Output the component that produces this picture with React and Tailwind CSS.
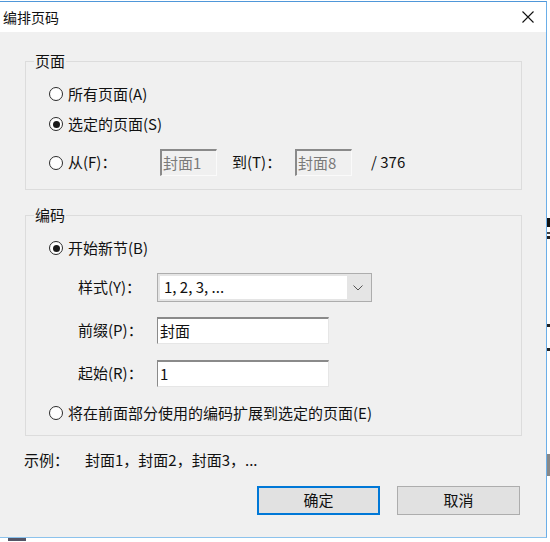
import React from 'react';

const Radio = ({ checked }) => (
  <span className="w-[14px] h-[14px] rounded-full border border-[#2b2b2b] bg-white flex items-center justify-center shrink-0">
    {checked && <span className="w-[7px] h-[7px] rounded-full bg-[#1a1a1a]"></span>}
  </span>
);

const Group = ({ title, className, children }) => (
  <div className={`relative w-[497px] border border-[#dcdcdc] ${className}`}>
    <span className="absolute left-[8px] -top-[11px] px-[1px] bg-[#f0f0f0] leading-[20px]">{title}</span>
    {children}
  </div>
);

const DisabledInput = ({ value, width }) => (
  <div className={`h-[27px] ${width} bg-[#f0f0f0] border-t-2 border-l-2 border-[#8a8a8a] border-r border-b border-r-[#fafafa] border-b-[#fafafa] flex items-center pl-[1px] text-[#7a7a7a]`}>
    {value}
  </div>
);

const TextInput = ({ value }) => (
  <div className="h-[27px] w-[172px] bg-white border-t-2 border-l border-[#8a8a8a] border-r border-b border-r-[#e6e6e6] border-b-[#e6e6e6] flex items-center pl-[2px]">
    {value}
  </div>
);

export default function App() {
  return (
    <div className="w-[550px] h-[542px] bg-white relative overflow-hidden text-[15px] text-[#111]" style={{ fontFamily: '"Noto Sans CJK SC", "Noto Sans", sans-serif' }}>
      <div className="mt-[1px] w-[547px] h-[537px] border-t border-r border-b border-t-[#4f97d9] border-r-[#6aaee8] border-b-[#8cc2ec] flex flex-col">
        {/* title bar */}
        <div className="h-[30px] bg-white flex items-center justify-between pl-[3px] pr-[11px] shrink-0">
          <span className="text-[14px] leading-none">编排页码</span>
          <svg width="12" height="12" viewBox="0 0 12 12" className="mr-[1px]">
            <path d="M0.5 0.5 L11.5 11.5 M11.5 0.5 L0.5 11.5" stroke="#111" strokeWidth="1.1" />
          </svg>
        </div>

        {/* body */}
        <div className="flex-1 bg-[#f0f0f0] pl-[25px] flex flex-col">
          <Group title="页面" className="mt-[29px] pt-[22px] pb-[13px] pl-[23px]">
            <label className="flex items-center gap-[5px] h-[20px]">
              <Radio />
              <span>所有页面(A)</span>
            </label>
            <label className="flex items-center gap-[5px] h-[20px] mt-[10px]">
              <Radio checked />
              <span>选定的页面(S)</span>
            </label>
            <div className="flex items-center h-[27px] mt-[15px]">
              <label className="flex items-center gap-[5px] w-[111px]">
                <Radio />
                <span>从(F)：</span>
              </label>
              <DisabledInput value="封面1" width="w-[57px]" />
              <span className="ml-[15px] w-[63px]">到(T)：</span>
              <DisabledInput value="封面8" width="w-[57px]" />
              <span className="ml-[19px]">/ 376</span>
            </div>
          </Group>

          <Group title="编码" className="mt-[25px] pt-[22px] pb-[12px] pl-[23px]">
            <label className="flex items-center gap-[5px] h-[20px]">
              <Radio checked />
              <span>开始新节(B)</span>
            </label>
            <div className="flex items-center mt-[15px] pl-[29px]">
              <span className="w-[79px]">样式(Y)：</span>
              <div className="w-[215px] h-[29px] border border-[#adadad] bg-[#e5e5e5] flex items-center p-[2px]">
                <div className="flex-1 h-full bg-white flex items-center pl-[4px]">1, 2, 3, ...</div>
                <div className="w-[22px] flex items-center justify-center">
                  <svg width="10" height="6" viewBox="0 0 10 6">
                    <path d="M0.5 0.5 L5 5 L9.5 0.5" fill="none" stroke="#555" strokeWidth="1" />
                  </svg>
                </div>
              </div>
            </div>
            <div className="flex items-center mt-[15px] pl-[29px]">
              <span className="w-[79px]">前缀(P)：</span>
              <TextInput value="封面" />
            </div>
            <div className="flex items-center mt-[16px] pl-[29px]">
              <span className="w-[79px]">起始(R)：</span>
              <TextInput value="1" />
            </div>
            <label className="flex items-center gap-[5px] h-[20px] mt-[16px]">
              <Radio />
              <span>将在前面部分使用的编码扩展到选定的页面(E)</span>
            </label>
          </Group>

          <div className="flex items-center h-[20px] mt-[14px] -ml-[1px]">
            <span className="w-[61px]">示例：</span>
            <span>封面1，封面2，封面3，...</span>
          </div>

          <div className="flex justify-end gap-[17px] mt-[16px] pr-[26px]">
            <button className="w-[123px] h-[29px] bg-[#e1e1e1] border-2 border-[#0078d7] text-[15px]">确定</button>
            <button className="w-[123px] h-[29px] bg-[#e1e1e1] border border-[#adadad] text-[15px]">取消</button>
          </div>
        </div>
      </div>

      {/* bits of the page behind the dialog */}
      <div className="absolute left-[547px] top-[218px] w-[3px] h-[9px] bg-[#111]"></div>
      <div className="absolute left-[547px] top-[232px] w-[3px] h-[2px] bg-[#444]"></div>
      <div className="absolute left-[547px] top-[236px] w-[3px] h-[3px] bg-[#222]"></div>
      <div className="absolute left-[547px] top-[324px] w-[3px] h-[3px] bg-[#222]"></div>
      <div className="absolute left-[547px] top-[348px] w-[3px] h-[3px] bg-[#222]"></div>
      <div className="absolute left-[547px] top-[454px] w-[3px] h-[22px] bg-[#888]"></div>
      <div className="absolute left-[8px] top-[538px] w-[18px] h-[3px] bg-[#556]"></div>
    </div>
  );
}
